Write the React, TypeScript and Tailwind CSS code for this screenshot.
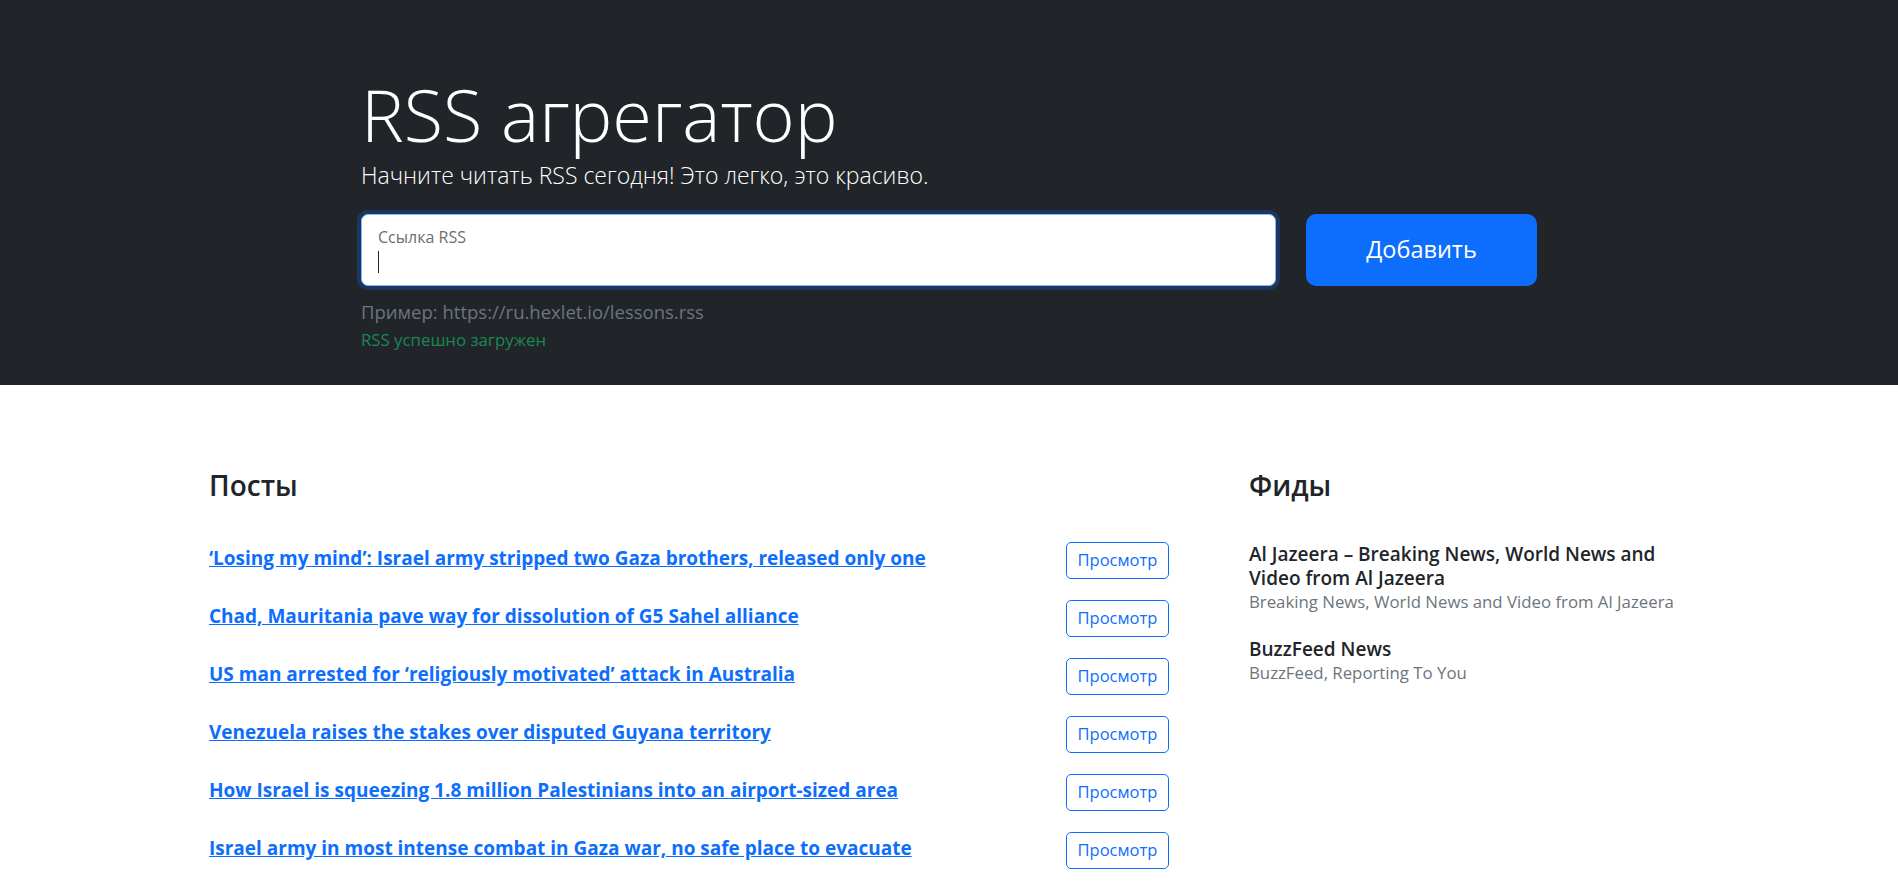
import React from 'react';

const POSTS = [
    '‘Losing my mind’: Israel army stripped two Gaza brothers, released only one',
    'Chad, Mauritania pave way for dissolution of G5 Sahel alliance',
    'US man arrested for ‘religiously motivated’ attack in Australia',
    'Venezuela raises the stakes over disputed Guyana territory',
    'How Israel is squeezing 1.8 million Palestinians into an airport-sized area',
    'Israel army in most intense combat in Gaza war, no safe place to evacuate',
];

const FEEDS = [
    {
        title: 'Al Jazeera – Breaking News, World News and Video from Al Jazeera',
        description: 'Breaking News, World News and Video from Al Jazeera',
    },
    {
        title: 'BuzzFeed News',
        description: 'BuzzFeed, Reporting To You',
    },
];

const App: React.FC = () => {
    return (
        <div className="min-h-screen bg-white font-['Open_Sans','Noto_Sans',sans-serif] text-[#212529]">
            {/* Hero */}
            <section className="bg-[#212529] h-[385px]">
                <div className="w-[1176px] mx-auto pt-[72px]">
                    <h1 className="text-[72px] leading-[84px] font-light text-white">RSS агрегатор</h1>
                    <p className="mt-[5px] text-[23px] leading-[28px] font-light text-white">
                        Начните читать RSS сегодня! Это легко, это красиво.
                    </p>
                    <form className="mt-[25px] flex gap-[30px] h-[72px]" onSubmit={(e) => e.preventDefault()}>
                        <div className="relative flex-1 bg-white rounded-[7px] border border-[#86b7fe] ring-4 ring-[#0d6efd]/25">
                            <input
                                aria-label="url"
                                autoComplete="off"
                                className="w-full h-full bg-transparent outline-none px-4 pt-6 text-[16px]"
                            />
                            <label className="absolute left-4 top-[12px] text-[16px] leading-[20px] text-[#6b6e71] pointer-events-none">
                                Ссылка RSS
                            </label>
                            <span className="absolute left-4 top-[36px] w-px h-[22px] bg-[#212529]" />
                        </div>
                        <button
                            type="submit"
                            className="w-[231px] h-full rounded-[10px] bg-[#0d6efd] text-white text-[23.5px]"
                        >
                            Добавить
                        </button>
                    </form>
                    <p className="mt-[13px] text-[18.5px] leading-[26px] text-[#6c757d]">
                        Пример: https://ru.hexlet.io/lessons.rss
                    </p>
                    <p className="mt-[4px] text-[16.8px] leading-[22px] text-[#198754]">RSS успешно загружен</p>
                </div>
            </section>

            {/* Posts and feeds */}
            <section className="w-[1480px] mx-auto pt-[83px] flex gap-[80px]">
                <div className="w-[960px]">
                    <h2 className="text-[28px] leading-[34px] font-semibold">Посты</h2>
                    <ul className="mt-[40px]">
                        {POSTS.map((post) => (
                            <li key={post} className="flex items-start justify-between h-[58px]">
                                <a href="#" className="mt-[2px] text-[19px] leading-[29px] font-bold text-[#0d6efd] underline">
                                    {post}
                                </a>
                                <button className="w-[103px] h-[37px] rounded-[5px] border border-[#0d6efd] text-[#0d6efd] text-[16.5px]">
                                    Просмотр
                                </button>
                            </li>
                        ))}
                    </ul>
                </div>
                <div className="flex-1">
                    <h2 className="text-[28px] leading-[34px] font-semibold">Фиды</h2>
                    <ul className="mt-[40px] space-y-[23px]">
                        {FEEDS.map((feed) => (
                            <li key={feed.title}>
                                <h3 className="text-[19px] leading-[24px] font-semibold">{feed.title}</h3>
                                <p className="text-[16.8px] leading-[24px] text-[#6c757d]">{feed.description}</p>
                            </li>
                        ))}
                    </ul>
                </div>
            </section>
        </div>
    );
};

export default App;
